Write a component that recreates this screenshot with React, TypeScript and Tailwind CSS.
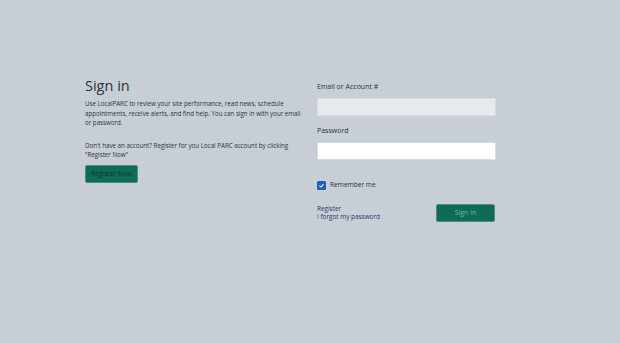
import React from "react";

export default function App() {
  return (
    <div
      className="w-[620px] h-[343px] bg-[#c8ced5] text-[#2c3440]"
      style={{ fontFamily: '"Open Sans", "Noto Sans", sans-serif' }}
    >
      <div className="flex pt-[76px] pl-[85px]">
        <div className="w-[220px]">
          <h1 className="text-[14.5px] leading-[20px] text-[#2b3340] font-normal">Sign in</h1>
          <p className="mt-[3px] text-[6.2px] leading-[9.5px] text-[#2c3440]">
            Use LocalPARC to review your site performance, read news, schedule appointments, receive alerts, and find help. You can sign in with your email or password.
          </p>
          <p className="mt-[13px] text-[6.2px] leading-[9.5px] text-[#2c3440]">
            Don't have an account? Register for you Local PARC account by clicking "Register Now"
          </p>
          <button className="mt-[5px] h-[18px] w-[53px] rounded-[2px] bg-[#0e6b57] border border-[#4d8f7f] text-[6.6px] text-[#0c3a36] flex items-center justify-center">
            Register Now
          </button>
        </div>
        <div className="ml-[12px] w-[179px] pt-[6px]">
          <label className="block text-[7px] leading-[10px] text-[#2b3340]">Email or Account #</label>
          <div className="mt-[6px] h-[18px] bg-[#e7e9ec] border border-[#d8dce0]" />
          <label className="mt-[10px] block text-[7px] leading-[10px] text-[#2b3340]">Password</label>
          <div className="mt-[6px] h-[18px] bg-white border border-[#d8dce0]" />
          <div className="mt-[20px] flex items-center">
            <div className="w-[9px] h-[9px] bg-[#1f5fb8] rounded-[1.5px] flex items-center justify-center">
              <svg width="7" height="7" viewBox="0 0 10 10">
                <path d="M2 5.2 L4.2 7.2 L8 3" stroke="#e8eef8" strokeWidth="1.6" fill="none" />
              </svg>
            </div>
            <span className="ml-[4px] text-[6.6px] leading-[10px] text-[#2b3340]">Remember me</span>
          </div>
          <div className="mt-[14px] flex items-center justify-between">
            <div className="flex flex-col text-[6.4px] leading-[8px] text-[#1d3d6b]">
              <span>Register</span>
              <span>I forgot my password</span>
            </div>
            <button className="mr-[1px] h-[18px] w-[59px] rounded-[2px] bg-[#0e6b57] border border-[#4d8f7f] text-[7px] text-[#6fb8a6] flex items-center justify-center">
              Sign in
            </button>
          </div>
        </div>
      </div>
    </div>
  );
}
